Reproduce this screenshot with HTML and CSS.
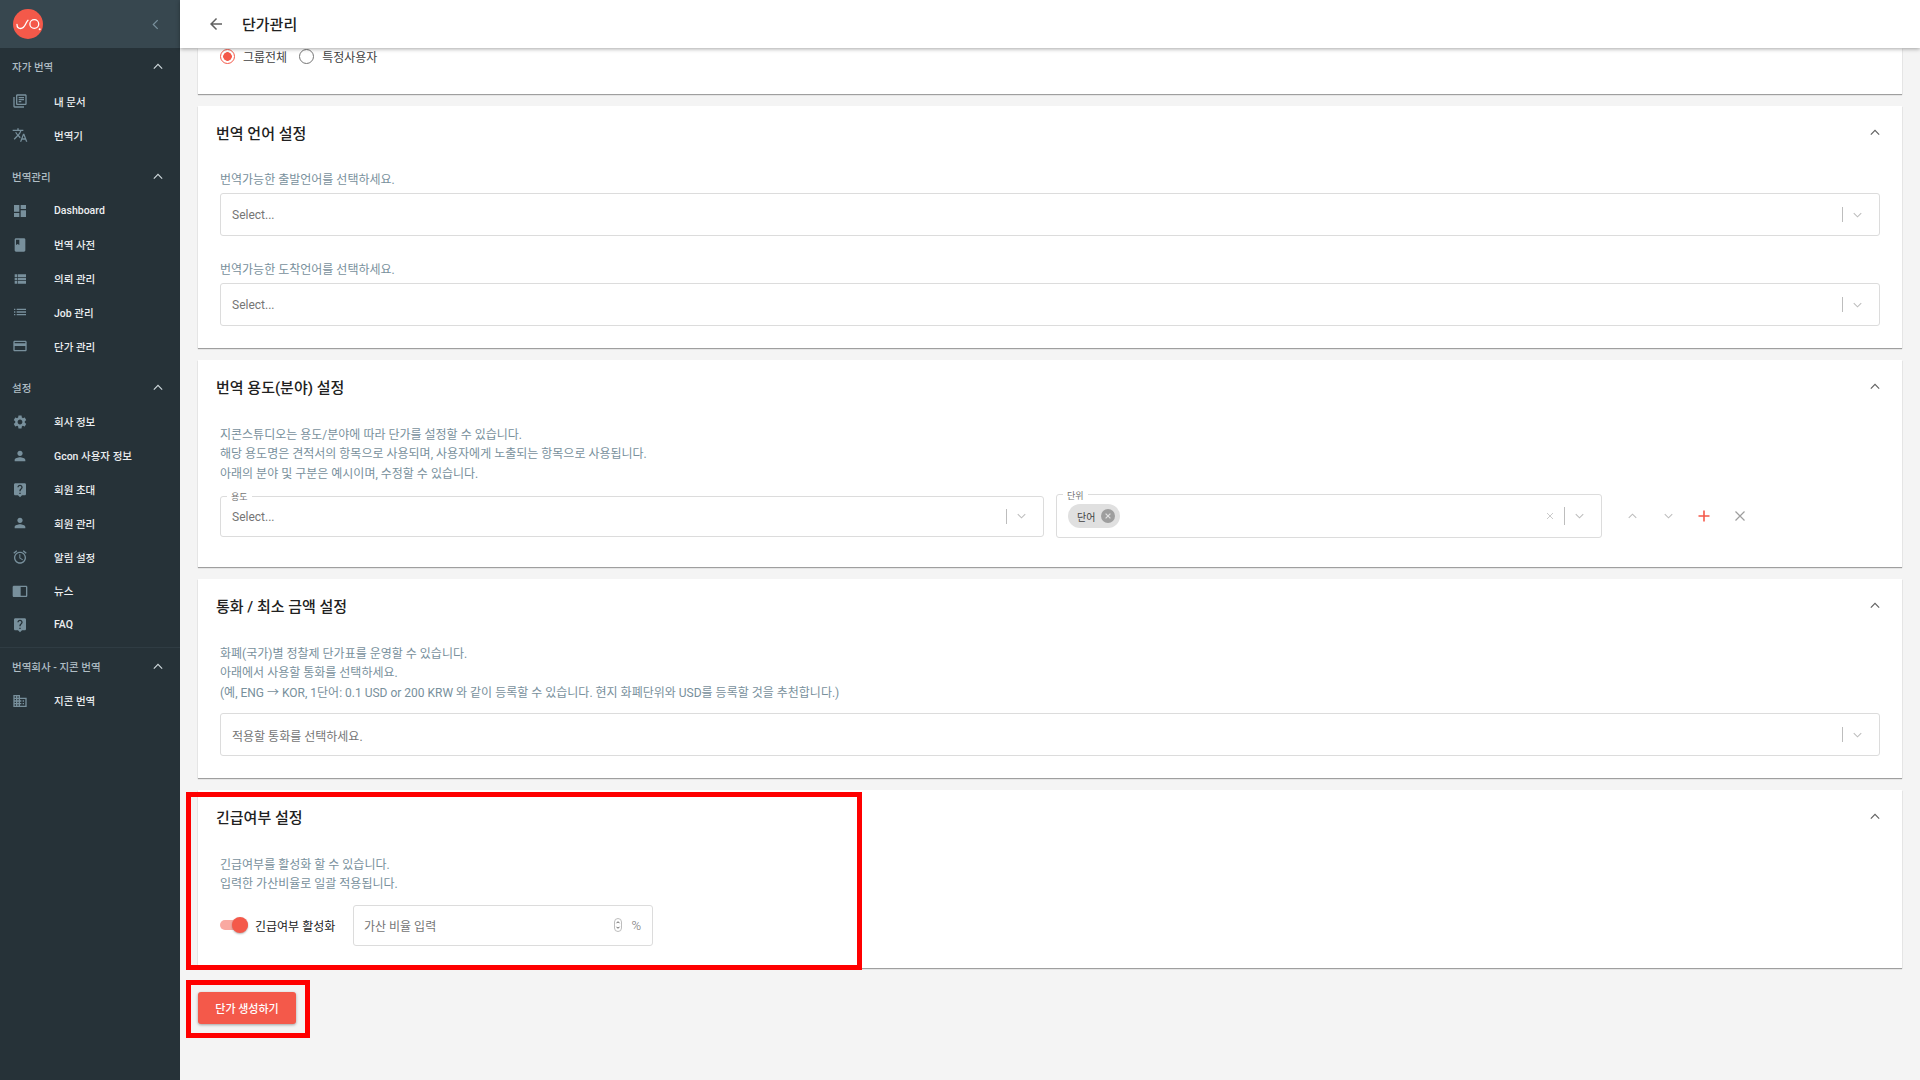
FILE: index.html
```html
<!DOCTYPE html>
<html lang="ko">
<head>
<meta charset="utf-8">
<title>단가관리</title>
<link rel="stylesheet" href="styles.css">
</head>
<body>
<svg class="defs" aria-hidden="true">
  <symbol id="i-books" viewBox="0 0 24 24"><path d="M4 6H2v14c0 1.1.9 2 2 2h14v-2H4V6zm16-4H8c-1.1 0-2 .9-2 2v12c0 1.1.9 2 2 2h12c1.1 0 2-.9 2-2V4c0-1.1-.9-2-2-2zm0 14H8V4h12v12zM10 9h8v2h-8zm0 3h4v2h-4zm0-6h8v2h-8z"/></symbol>
  <symbol id="i-translate" viewBox="0 0 24 24"><path d="M12.87 15.07l-2.54-2.51.03-.03c1.74-1.94 2.98-4.17 3.71-6.53H17V4h-7V2H8v2H1v1.99h11.17C11.5 7.92 10.44 9.75 9 11.35 8.07 10.32 7.3 9.19 6.69 8h-2c.73 1.63 1.73 3.17 2.98 4.56l-5.09 5.02L4 19l5-5 3.11 3.11.76-2.04zM18.5 10h-2L12 22h2l1.12-3h4.75L21 22h2l-4.5-12zm-2.62 7l1.62-4.33L19.12 17h-3.24z"/></symbol>
  <symbol id="i-dash" viewBox="0 0 24 24"><path d="M3 13h8V3H3v10zm0 8h8v-6H3v6zm10 0h8V11h-8v10zm0-18v6h8V3h-8z"/></symbol>
  <symbol id="i-book" viewBox="0 0 24 24"><path d="M18 2H6c-1.1 0-2 .9-2 2v16c0 1.1.9 2 2 2h12c1.1 0 2-.9 2-2V4c0-1.1-.9-2-2-2zM6 4h5v8l-2.5-1.5L6 12V4z"/></symbol>
  <symbol id="i-vlist" viewBox="0 0 24 24"><path d="M4 14h4v-4H4v4zm0 5h4v-4H4v4zM4 9h4V5H4v4zm5 5h12v-4H9v4zm0 5h12v-4H9v4zM9 5v4h12V5H9z"/></symbol>
  <symbol id="i-list" viewBox="0 0 24 24"><path d="M3 13h2v-2H3v2zm0 4h2v-2H3v2zm0-8h2V7H3v2zm4 4h14v-2H7v2zm0 4h14v-2H7v2zM7 7v2h14V7H7z"/></symbol>
  <symbol id="i-card" viewBox="0 0 24 24"><path d="M20 4H4c-1.11 0-1.99.89-1.99 2L2 18c0 1.11.89 2 2 2h16c1.11 0 2-.89 2-2V6c0-1.11-.89-2-2-2zm0 14H4v-6h16v6zm0-10H4V6h16v2z"/></symbol>
  <symbol id="i-gear" viewBox="0 0 24 24"><path d="M19.14 12.94c.04-.3.06-.61.06-.94 0-.32-.02-.64-.07-.94l2.03-1.58c.18-.14.23-.41.12-.61l-1.92-3.32c-.12-.22-.37-.29-.59-.22l-2.39.96c-.5-.38-1.03-.7-1.62-.94l-.36-2.54c-.04-.24-.24-.41-.48-.41h-3.84c-.24 0-.43.17-.47.41l-.36 2.54c-.59.24-1.13.57-1.62.94l-2.39-.96c-.22-.08-.47 0-.59.22L2.74 8.87c-.12.21-.08.47.12.61l2.03 1.58c-.05.3-.09.63-.09.94s.02.64.07.94l-2.03 1.58c-.18.14-.23.41-.12.61l1.92 3.32c.12.22.37.29.59.22l2.39-.96c.5.38 1.03.7 1.62.94l.36 2.54c.05.24.24.41.48.41h3.84c.24 0 .44-.17.47-.41l.36-2.54c.59-.24 1.13-.56 1.62-.94l2.39.96c.22.08.47 0 .59-.22l1.92-3.32c.12-.22.07-.47-.12-.61l-2.01-1.58zM12 15.6c-1.98 0-3.6-1.62-3.6-3.6s1.62-3.6 3.6-3.6 3.6 1.62 3.6 3.6-1.62 3.6-3.6 3.6z"/></symbol>
  <symbol id="i-person" viewBox="0 0 24 24"><path d="M12 12c2.21 0 4-1.79 4-4s-1.79-4-4-4-4 1.79-4 4 1.79 4 4 4zm0 2c-2.67 0-8 1.34-8 4v2h16v-2c0-2.66-5.33-4-8-4z"/></symbol>
  <symbol id="i-help" viewBox="0 0 24 24"><path d="M19 2H5c-1.11 0-2 .9-2 2v14c0 1.1.89 2 2 2h4l3 3 3-3h4c1.1 0 2-.9 2-2V4c0-1.1-.9-2-2-2zm-6 16h-2v-2h2v2zm2.07-7.75l-.9.92C13.45 11.9 13 12.5 13 14h-2v-.5c0-1.1.45-2.1 1.17-2.83l1.24-1.26c.37-.36.59-.86.59-1.41 0-1.1-.9-2-2-2s-2 .9-2 2H8c0-2.21 1.79-4 4-4s4 1.79 4 4c0 .88-.36 1.68-.93 2.25z"/></symbol>
  <symbol id="i-alarm" viewBox="0 0 24 24"><path d="M22 5.72l-4.6-3.86-1.29 1.53 4.6 3.86L22 5.72zM7.88 3.39L6.6 1.86 2 5.71l1.29 1.53 4.59-3.85zM12.5 8H11v6l4.75 2.85.75-1.23-4-2.37V8zM12 4c-4.97 0-9 4.03-9 9s4.03 9 9 9c4.97 0 9-4.03 9-9s-4.03-9-9-9zm0 16c-3.87 0-7-3.13-7-7s3.13-7 7-7 7 3.13 7 7-3.13 7-7 7z"/></symbol>
  <symbol id="i-news" viewBox="0 0 24 24"><path fill-rule="evenodd" d="M21 4H3c-1.1 0-2 .9-2 2v13c0 1.1.9 2 2 2h18c1.1 0 2-.9 2-2V6c0-1.1-.9-2-2-2zm0 15h-8V6h8v13z"/></symbol>
  <symbol id="i-domain" viewBox="0 0 24 24"><path d="M12 7V3H2v18h20V7H12zM6 19H4v-2h2v2zm0-4H4v-2h2v2zm0-4H4V9h2v2zm0-4H4V5h2v2zm4 12H8v-2h2v2zm0-4H8v-2h2v2zm0-4H8V9h2v2zm0-4H8V5h2v2zm10 12h-8v-2h2v-2h-2v-2h2v-2h-2V9h8v10zm-2-8h-2v2h2v-2zm0 4h-2v2h2v-2z"/></symbol>
  <symbol id="i-up" viewBox="0 0 12 8"><path d="M1 6.5l5-5 5 5" fill="none" stroke="currentColor" stroke-width="1.4"/></symbol>
  <symbol id="i-down" viewBox="0 0 12 8"><path d="M1 1.5l5 5 5-5" fill="none" stroke="currentColor" stroke-width="1.4"/></symbol>
  <symbol id="i-x" viewBox="0 0 12 12"><path d="M1.5 1.5l9 9m0-9l-9 9" fill="none" stroke="currentColor" stroke-width="1.2"/></symbol>
</svg>

<div class="app">
  <aside class="sidebar">
    <div class="brand">
      <svg class="logo" viewBox="0 0 30 30"><circle cx="15" cy="15" r="15" fill="#f4594a"/><path d="M4 15.5c0 2.5 1.5 4 3.7 4 3 0 4.2-3 5.2-5 .6-1.2 1.1-2.4 2.1-3.2" fill="none" stroke="#fff" stroke-width="1.3" stroke-linecap="round"/><circle cx="21.3" cy="15" r="4.4" fill="none" stroke="#fff" stroke-width="1.3"/><circle cx="26.7" cy="20.3" r="1" fill="#fff"/></svg>
      <svg class="brand-back" viewBox="0 0 8 12"><path d="M6.5 1L1.5 6l5 5" fill="none" stroke="currentColor" stroke-width="1.4"/></svg>
    </div>
    <nav class="nav">
      <section class="group">
        <div class="group-head"><span>자가 번역</span><svg class="chev"><use href="#i-up"/></svg></div>
        <a class="item"><svg class="ico"><use href="#i-books"/></svg><span>내 문서</span></a>
        <a class="item"><svg class="ico"><use href="#i-translate"/></svg><span>번역기</span></a>
      </section>
      <section class="group">
        <div class="group-head"><span>번역관리</span><svg class="chev"><use href="#i-up"/></svg></div>
        <a class="item"><svg class="ico"><use href="#i-dash"/></svg><span>Dashboard</span></a>
        <a class="item"><svg class="ico"><use href="#i-book"/></svg><span>번역 사전</span></a>
        <a class="item"><svg class="ico"><use href="#i-vlist"/></svg><span>의뢰 관리</span></a>
        <a class="item"><svg class="ico"><use href="#i-list"/></svg><span>Job 관리</span></a>
        <a class="item"><svg class="ico"><use href="#i-card"/></svg><span>단가 관리</span></a>
      </section>
      <section class="group group-line">
        <div class="group-head"><span>설정</span><svg class="chev"><use href="#i-up"/></svg></div>
        <a class="item"><svg class="ico"><use href="#i-gear"/></svg><span>회사 정보</span></a>
        <a class="item"><svg class="ico"><use href="#i-person"/></svg><span>Gcon 사용자 정보</span></a>
        <a class="item"><svg class="ico"><use href="#i-help"/></svg><span>회원 초대</span></a>
        <a class="item"><svg class="ico"><use href="#i-person"/></svg><span>회원 관리</span></a>
        <a class="item"><svg class="ico"><use href="#i-alarm"/></svg><span>알림 설정</span></a>
        <a class="item"><svg class="ico"><use href="#i-news"/></svg><span>뉴스</span></a>
        <a class="item"><svg class="ico"><use href="#i-help"/></svg><span>FAQ</span></a>
      </section>
      <section class="group">
        <div class="group-head"><span>번역회사 - 지콘 번역</span><svg class="chev"><use href="#i-up"/></svg></div>
        <a class="item"><svg class="ico"><use href="#i-domain"/></svg><span>지콘 번역</span></a>
      </section>
    </nav>
  </aside>

  <div class="main">
    <header class="topbar">
      <svg class="back" viewBox="0 0 24 24"><path d="M20 11H7.83l5.59-5.59L12 4l-8 8 8 8 1.41-1.41L7.83 13H20v-2z"/></svg>
      <h1 class="page-title">단가관리</h1>
    </header>

    <div class="content">
      <section class="card card-first">
        <div class="radios">
          <label class="radio"><span class="radio-mark on"></span>그룹전체</label>
          <label class="radio"><span class="radio-mark"></span>특정사용자</label>
        </div>
      </section>

      <section class="card">
        <div class="card-head"><h2>번역 언어 설정</h2><svg class="card-chev"><use href="#i-up"/></svg></div>
        <div class="card-body body-fields">
          <div class="field-label">번역가능한 출발언어를 선택하세요.</div>
          <div class="select"><span class="placeholder">Select...</span><span class="sep"></span><svg class="sel-chev"><use href="#i-down"/></svg></div>
          <div class="field-label second">번역가능한 도착언어를 선택하세요.</div>
          <div class="select"><span class="placeholder">Select...</span><span class="sep"></span><svg class="sel-chev"><use href="#i-down"/></svg></div>
        </div>
      </section>

      <section class="card">
        <div class="card-head"><h2>번역 용도(분야) 설정</h2><svg class="card-chev"><use href="#i-up"/></svg></div>
        <div class="card-body body-tall">
          <p class="desc">지콘스튜디오는 용도/분야에 따라 단가를 설정할 수 있습니다.<br>해당 용도명은 견적서의 항목으로 사용되며, 사용자에게 노출되는 항목으로 사용됩니다.<br>아래의 분야 및 구분은 예시이며, 수정할 수 있습니다.</p>
          <div class="usage-row">
            <div class="select sel-usage"><span class="legend">용도</span><span class="placeholder">Select...</span><span class="sep"></span><svg class="sel-chev"><use href="#i-down"/></svg></div>
            <div class="select sel-unit">
              <span class="legend legend-unit">단위</span>
              <span class="chip">단어<svg class="chip-x" viewBox="0 0 14 14"><circle cx="7" cy="7" r="7" fill="#9e9e9e"/><path d="M4.6 4.6l4.8 4.8m0-4.8l-4.8 4.8" stroke="#e0e0e0" stroke-width="1.2"/></svg></span>
              <svg class="sel-x"><use href="#i-x"/></svg><span class="sep sep-tight"></span><svg class="sel-chev"><use href="#i-down"/></svg>
            </div>
            <div class="row-actions">
              <span class="act"><svg class="act-chev"><use href="#i-up"/></svg></span>
              <span class="act"><svg class="act-chev"><use href="#i-down"/></svg></span>
              <span class="act"><svg class="act-plus" viewBox="0 0 12 12"><path d="M6 .5v11M.5 6h11" stroke="#f4594a" stroke-width="1.6"/></svg></span>
              <span class="act"><svg class="act-x"><use href="#i-x"/></svg></span>
            </div>
          </div>
        </div>
      </section>

      <section class="card">
        <div class="card-head"><h2>통화 / 최소 금액 설정</h2><svg class="card-chev"><use href="#i-up"/></svg></div>
        <div class="card-body">
          <p class="desc">화폐(국가)별 정찰제 단가표를 운영할 수 있습니다.<br>아래에서 사용할 통화를 선택하세요.<br>(예, ENG → KOR, 1단어: 0.1 USD or 200 KRW 와 같이 등록할 수 있습니다. 현지 화폐단위와 USD를 등록할 것을 추천합니다.)</p>
          <div class="select"><span class="placeholder">적용할 통화를 선택하세요.</span><span class="sep"></span><svg class="sel-chev"><use href="#i-down"/></svg></div>
        </div>
      </section>

      <section class="card">
        <div class="card-head"><h2>긴급여부 설정</h2><svg class="card-chev"><use href="#i-up"/></svg></div>
        <div class="card-body">
          <p class="desc">긴급여부를 활성화 할 수 있습니다.<br>입력한 가산비율로 일괄 적용됩니다.</p>
          <div class="urgent-row">
            <span class="toggle"><span class="toggle-thumb"></span></span>
            <span class="toggle-label">긴급여부 활성화</span>
            <div class="rate-input">
              <span class="placeholder">가산 비율 입력</span>
              <svg class="spinner" viewBox="0 0 8 14"><rect x=".5" y=".5" width="7" height="13" rx="3.5" fill="#fff" stroke="#bdbdbd"/><path d="M2.5 5.2L4 3.7l1.5 1.5M2.5 8.8L4 10.3l1.5-1.5" fill="none" stroke="#616161"/></svg>
              <span class="unit">%</span>
            </div>
          </div>
        </div>
      </section>

      <button class="submit">단가 생성하기</button>
    </div>

    <div class="mark mark-section"></div>
    <div class="mark mark-button"></div>
  </div>
</div>
</body>
</html>
```

FILE: styles.css
```css
* { box-sizing: border-box; }
html, body { margin: 0; height: 100%; }
body {
  font-family: Roboto, "Noto Sans CJK KR", sans-serif;
  font-size: 12px;
  color: #212121;
  background: #f4f4f4;
  overflow: hidden;
}
.defs { position: absolute; width: 0; height: 0; }
.app { display: flex; height: 1080px; }

/* Sidebar */
.sidebar { width: 180px; flex: none; background: #263238; color: #eceff1; }
.brand {
  height: 48px; display: flex; align-items: center; justify-content: space-between;
  padding: 0 21px 0 13px; background: #37474f;
}
.logo { width: 30px; height: 30px; }
.brand-back { width: 7px; height: 11px; color: #78909c; }
.nav { padding-top: .5px; }
.group { padding-bottom: 6px; }
.group-line { border-bottom: 1px solid #2f3c43; padding-bottom: 5.4px; }
.group-head {
  height: 36px; display: flex; align-items: center; justify-content: space-between;
  padding: 0 17px 0 12px; font-size: 10.5px; font-weight: 500; color: #b0bec5;
}
.chev { width: 10px; height: 7px; color: #cfd8dc; }
.item {
  height: 33.8px; display: flex; align-items: center; padding-left: 11.5px;
  font-size: 10.5px; font-weight: 500; color: #eceff1;
}
.ico { width: 16px; height: 16px; margin-right: 26.5px; fill: #78909c; flex: none; }

/* Main */
.main { flex: 1; min-width: 0; position: relative; display: flex; flex-direction: column; }
.topbar {
  height: 48px; flex: none; display: flex; align-items: center; padding: 0 0 1px 27px;
  background: #fff; box-shadow: 0 1px 4px rgba(0,0,0,.35);
  position: relative; z-index: 2;
}
.back { width: 18px; height: 18px; fill: #616161; margin-right: 17px; }
.page-title { margin: 0; font-size: 15px; font-weight: 500; color: #212121; }
.content { padding: 0 18px; }

/* Cards */
.card { background: #fff; margin-bottom: 12px; box-shadow: 0 1px 1px rgba(0,0,0,.35); }
.card-first { height: 46px; padding-left: 22px; }
.radios { display: flex; height: 16px; align-items: center; gap: 12px; }
.radio { display: flex; align-items: center; gap: 8px; font-size: 12px; color: #424242; }
.radio-mark { width: 15px; height: 15px; border-radius: 50%; border: 1.5px solid #757575; background: #fff; }
.radio-mark.on { border-color: #f4594a; background: radial-gradient(circle, #f4594a 0 4px, #fff 4.6px); }
.card-head {
  height: 54px; display: flex; align-items: center; justify-content: space-between;
  padding: 0 22px 2px 18px;
}
.card-head h2 { margin: 0; font-size: 15px; font-weight: 500; color: #212121; }
.card-chev { width: 10px; height: 7px; color: #616161; }
.card-body { padding: 11.5px 22px 22px; }
.body-fields { padding-top: 10px; }
.body-tall { padding-bottom: 29px; }

.field-label { font-size: 12px; line-height: 20px; color: #78909c; margin-bottom: 3px; }
.field-label.second { margin-top: 24px; }
.desc { margin: 0 0 10px; font-size: 12px; line-height: 19.5px; color: #78909c; }

.select {
  height: 43px; display: flex; align-items: center; position: relative;
  border: 1px solid #dcdcdc; border-radius: 3px; padding: 0 18px 0 11px; background: #fff;
}
.placeholder { flex: 1; padding-top: 1px; font-size: 12px; color: #757575; }
.sep { width: 1px; height: 15px; background: #bdbdbd; margin-right: 10px; margin-left: 1px; }
.sep-tight { margin-left: 10px; height: 18px; }
.sel-chev { width: 9px; height: 6px; color: #bdbdbd; }
.select > .sel-chev { margin-right: -1px; }
.sel-x { width: 8px; height: 8px; color: #bdbdbd; }

.usage-row { display: flex; align-items: center; }
.sel-usage { width: 824px; height: 41px; margin-right: 12px; }
.sel-unit { width: 546px; height: 44px; margin-right: 12px; }
.sel-unit .chip { margin-right: auto; }
.legend {
  position: absolute; left: 6px; top: -6px; padding: 0 4px; background: #fff;
  font-size: 9px; line-height: 12px; color: #757575;
}
.legend-unit { top: -5px; }
.chip {
  height: 24px; width: 52px; border-radius: 12px; background: #e0e0e0; display: flex;
  align-items: center; padding: 0 5px 0 9px; justify-content: space-between;
  font-size: 10px; color: #424242;
}
.chip-x { width: 14px; height: 14px; }
.row-actions { display: flex; }
.act { width: 36px; display: flex; align-items: center; justify-content: center; }
.act-chev { width: 9px; height: 6px; color: #bdbdbd; }
.act-plus { width: 12px; height: 12px; }
.act-x { width: 12px; height: 12px; color: #9e9e9e; }

.urgent-row { display: flex; align-items: center; }
.toggle { width: 28px; height: 10px; border-radius: 5px; background: #f9a9a1; position: relative; margin-right: 7px; }
.toggle-thumb {
  position: absolute; right: 0; top: -3px; width: 16px; height: 16px; border-radius: 50%;
  background: #f4594a; box-shadow: 0 1px 2px rgba(0,0,0,.3);
}
.toggle-label { font-size: 12px; color: #212121; width: 98px; }
.rate-input {
  width: 300px; height: 41px; display: flex; align-items: center; padding: 0 11px 0 10px;
  border: 1px solid #dcdcdc; border-radius: 3px;
}
.spinner { width: 8px; height: 14px; margin-right: 9px; }
.unit { font-size: 13px; font-weight: 300; color: #757575; }

.submit {
  display: block; width: 98px; height: 32px; margin-top: 24px; border: 0; border-radius: 3px;
  background: #f4594a; color: #fff; font: 500 11px Roboto, "Noto Sans CJK KR", sans-serif;
  box-shadow: 0 1px 3px rgba(0,0,0,.35);
}

/* Red annotation boxes drawn over the page */
.mark { position: absolute; border: 5px solid #f00; pointer-events: none; z-index: 3; }
.mark-section { left: 6px; top: 792px; width: 676px; height: 178px; }
.mark-button { left: 6px; top: 980px; width: 124px; height: 58px; }
```
